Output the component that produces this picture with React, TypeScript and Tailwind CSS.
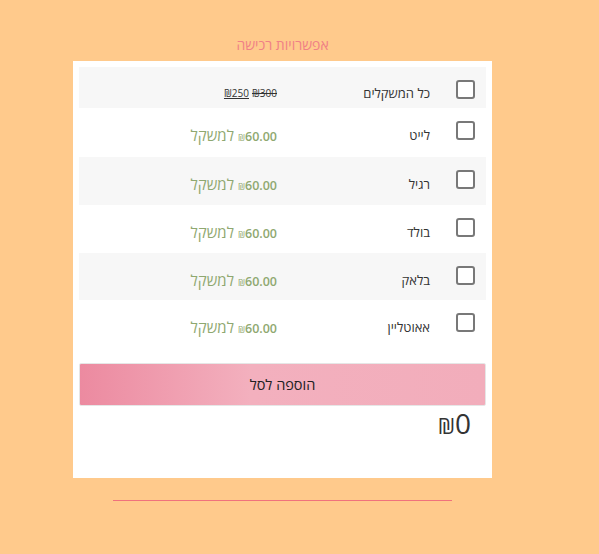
import React from "react";

const rows = [
  { name: "לייט", h: "h-[49px]", bg: "bg-white" },
  { name: "רגיל", h: "h-[48px]", bg: "bg-[#f7f7f7]" },
  { name: "בולד", h: "h-[48px]", bg: "bg-white" },
  { name: "בלאק", h: "h-[47px]", bg: "bg-[#f7f7f7]" },
  { name: "אאוטליין", h: "h-[48px]", bg: "bg-white" },
];

function Box() {
  return (
    <div className="ml-[26px] h-[19px] w-[19px] shrink-0 rounded-[3px] border-2 border-[#787878] bg-white" />
  );
}

export default function App() {
  return (
    <div
      className="min-h-screen bg-[#ffca8c] pt-[35px]"
      style={{ fontFamily: '"Open Sans", "Liberation Sans", "DejaVu Sans", sans-serif' }}
    >
      <div dir="rtl" className="ml-[73px] w-[419px]">
        <div className="mb-[6px] text-center text-[14px] leading-[20px] text-[#f08086]">אפשרויות רכישה</div>
        <div className="h-[417px] bg-white px-[6px] pt-[6px]">
          <div className="flex h-[41px] items-start bg-[#f7f7f7] pr-[11px] pt-[13px]">
            <Box />
            <div className="w-[153px] shrink-0 text-[13px] leading-[26px] text-[#333]">כל המשקלים</div>
            <div dir="ltr" className="flex text-[10px] leading-[26px] text-[#333]">
              <span className="underline">₪250</span>
              <span className="ml-[3px] line-through">₪300</span>
            </div>
          </div>
          {rows.map((r) => (
            <div key={r.name} className={`flex items-start pr-[11px] pt-[13px] ${r.h} ${r.bg}`}>
              <Box />
              <div className="w-[153px] shrink-0 text-[13px] leading-[29px] text-[#333]">{r.name}</div>
              <div dir="ltr" className="flex items-baseline leading-[28px] text-[#8fa870]">
                <span className="text-[15px]">למשקל</span>
                <span className="ml-[4px] text-[9px]">₪</span>
                <span className="text-[12.5px] font-semibold">60.00</span>
              </div>
            </div>
          ))}
          <div className="mt-[15px] flex h-[43px] items-center justify-center rounded-[2px] border border-[#e6e6e6] bg-[linear-gradient(to_right,#ec8aa0,#f3b0be_42%,#f2adbb)] text-[14.5px] text-[#222]">
            הוספה לסל
          </div>
          <div className="flex justify-start pr-[15px]">
            <div dir="ltr" className="flex items-baseline text-[28px] leading-[34px] text-[#333]">
              <span className="text-[22px]">₪</span>
              <span>0</span>
            </div>
          </div>
        </div>
        <div className="mx-[40px] mt-[22px] h-px bg-[#f0727c]" />
      </div>
    </div>
  );
}
